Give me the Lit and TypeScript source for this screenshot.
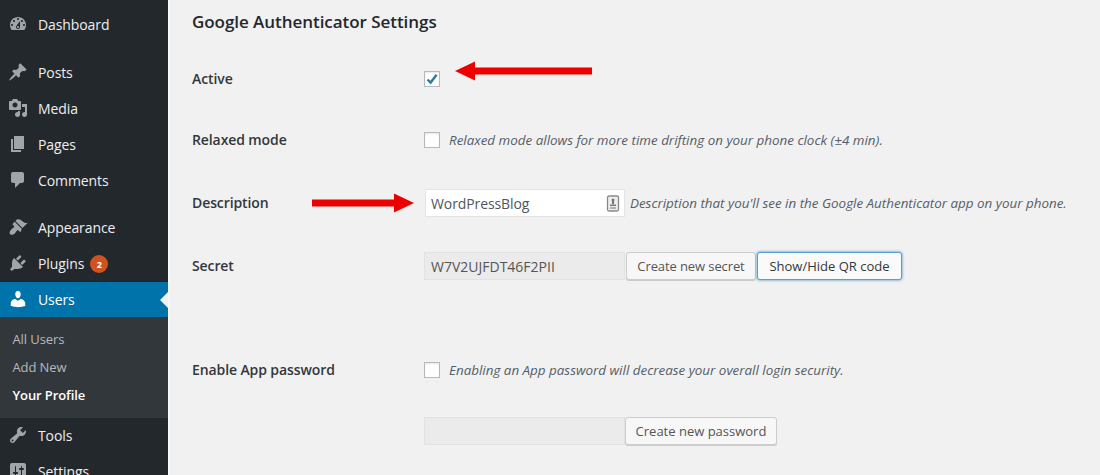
import { LitElement, html, css, svg } from "lit";
import { customElement } from "lit/decorators.js";

const ICONS: Record<string, string> = {
  dashboard: "M3.76 16h12.48c1.1-1.37 1.76-3.11 1.76-5 0-4.42-3.58-8-8-8s-8 3.58-8 8c0 1.89.66 3.63 1.76 5zM10 4c.55 0 1 .45 1 1s-.45 1-1 1-1-.45-1-1 .45-1 1-1zM6 6c.55 0 1 .45 1 1s-.45 1-1 1-1-.45-1-1 .45-1 1-1zm8 0c.55 0 1 .45 1 1s-.45 1-1 1-1-.45-1-1 .45-1 1-1zm-5.37 5.55L12 7v6c0 1.1-.9 2-2 2s-2-.9-2-2c0-.57.24-1.08.63-1.45zM4 10c.55 0 1 .45 1 1s-.45 1-1 1-1-.45-1-1 .45-1 1-1zm12 0c.55 0 1 .45 1 1s-.45 1-1 1-1-.45-1-1 .45-1 1-1zm-5 3c0-.55-.45-1-1-1s-1 .45-1 1 .45 1 1 1 1-.45 1-1z",
  post: "M10.44 3.02l1.82-1.82 6.36 6.35-1.83 1.82c-1.05-.68-2.48-.57-3.41.36l-.75.75c-.92.93-1.04 2.35-.35 3.41l-1.83 1.82-2.41-2.41-2.8 2.79c-.42.42-3.38 2.71-3.8 2.29s1.86-3.39 2.28-3.81l2.79-2.79L4.1 9.36l1.83-1.82c1.05.69 2.48.57 3.4-.36l.75-.75c.93-.92 1.05-2.35.36-3.41z",
  media: "M13 11V4c0-.55-.45-1-1-1h-1.67L9 1H5L3.67 3H2c-.55 0-1 .45-1 1v7c0 .55.45 1 1 1h10c.55 0 1-.45 1-1zM7 4.5c1.38 0 2.5 1.12 2.5 2.5S8.38 9.5 7 9.5 4.5 8.38 4.5 7 5.62 4.5 7 4.5zM14 6h5v10.5c0 1.38-1.12 2.5-2.5 2.5S14 17.88 14 16.5s1.12-2.5 2.5-2.5c.17 0 .34.02.5.05V9h-3V6zm-4 8.05V13h2v3.5c0 1.38-1.12 2.5-2.5 2.5S7 17.88 7 16.5 8.12 14 9.5 14c.17 0 .34.02.5.05z",
  page: "M6 15V2h10v13H6zm-1 1h8v2H3V5h2v11z",
  comments: "M5 2h9c1.1 0 2 .9 2 2v7c0 1.1-.9 2-2 2h-2l-5 5v-5H5c-1.1 0-2-.9-2-2V4c0-1.1.9-2 2-2z",
  appearance: "M14.48 11.06L7.41 3.99l1.5-1.5c.5-.56 2.3-.47 3.51.32 1.21.8 1.43 1.28 2.91 2.1 1.18.64 2.45 1.26 4.45.85zm-.71.71L6.7 4.7 4.93 6.47c-.39.39-.39 1.02 0 1.41l1.06 1.06c.39.39.39 1.03 0 1.42-.6.6-1.43 1.11-2.21 1.69-.35.26-.7.53-1.01.84-1.43 1.43-1.4 3.56-.57 4.36.8.8 2.92.85 4.36-.58.3-.31.57-.66.83-1.01.59-.78 1.09-1.61 1.69-2.21.39-.39 1.03-.39 1.42 0l1.06 1.06c.39.39 1.02.39 1.41 0z",
  plugins: "M13.11 4.36L9.87 7.6 8 5.73l3.24-3.24c.35-.34 1.05-.2 1.56.32.52.51.66 1.21.31 1.55zm-8 1.77l.91-1.12 9.01 9.01-1.19.84c-.71.71-2.63 1.16-3.82 1.16H6.14L4.9 17.26c-.59.59-1.54.59-2.12 0-.59-.58-.59-1.53 0-2.12l1.24-1.24v-3.88c0-1.13.4-3.19 1.09-3.89zm7.26 3.97l3.24-3.24c.34-.35 1.04-.2 1.55.31.52.51.66 1.21.31 1.55l-3.24 3.25z",
  users: "M10 9.25c-2.27 0-2.73-3.44-2.73-3.44C7 4.02 7.82 2 9.97 2c2.16 0 2.98 2.02 2.71 3.81 0 0-.41 3.44-2.68 3.44zm0 2.57L12.72 10c2.39 0 4.52 2.33 4.52 4.53v2.49s-3.65 1.13-7.24 1.13c-3.65 0-7.24-1.13-7.24-1.13v-2.49c0-2.25 1.94-4.48 4.47-4.48z",
  tools: "M16.68 9.77c-1.34 1.34-3.3 1.67-4.95.99l-5.41 6.52c-.99.99-2.59.99-3.58 0s-.99-2.59 0-3.57l6.52-5.42c-.68-1.65-.35-3.61.99-4.95 1.28-1.28 3.12-1.62 4.72-1.06l-2.89 2.89 2.82 2.82 2.86-2.87c.53 1.58.18 3.39-1.08 4.65zM3.81 16.21c.4.39 1.04.39 1.43 0 .4-.4.4-1.04 0-1.43-.39-.4-1.03-.4-1.43 0-.39.39-.39 1.03 0 1.43z",
  settings: "M18 16V4c0-1.1-.9-2-2-2H4c-1.1 0-2 .9-2 2v12c0 1.1.9 2 2 2h12c1.1 0 2-.9 2-2zM8 11h1c.55 0 1 .45 1 1s-.45 1-1 1H8v1.5c0 .28-.22.5-.5.5s-.5-.22-.5-.5V13H6c-.55 0-1-.45-1-1s.45-1 1-1h1V5.5c0-.28.22-.5.5-.5s.5.22.5.5V11zm5-2h-1c-.55 0-1-.45-1-1s.45-1 1-1h1V5.5c0-.28.22-.5.5-.5s.5.22.5.5V7h1c.55 0 1 .45 1 1s-.45 1-1 1h-1v5.5c0 .28-.22.5-.5.5s-.5-.22-.5-.5V9z",
};

const icon = (name: string) => html`<svg class="ico" viewBox="0 0 20 20" aria-hidden="true">${svg`<path d=${ICONS[name]}></path>`}</svg>`;

const item = (name: string, label: string, extra: unknown = "") =>
  html`<div class="item">${icon(name)}<span>${label}</span>${extra}</div>`;

@customElement("app-root")
export class AppRoot extends LitElement {
  static styles = css`
    :host {
      display: flex;
      width: 1100px;
      height: 475px;
      overflow: hidden;
      background: #f1f1f1;
      font-family: "Open Sans", "Noto Sans", sans-serif;
      font-size: 14px;
      color: #444;
    }
    .side {
      flex: none;
      box-sizing: content-box;
      width: 168px;
      height: 490px;
      padding-top: 7px;
      background: #23282d;
      border-right: 2px solid #f9f9f9;
      color: #eee;
      display: flex;
      flex-direction: column;
    }
    .item {
      flex: none;
      height: 36px;
      box-sizing: border-box;
      padding-bottom: 2px;
      display: flex;
      align-items: center;
      padding-left: 38px;
      position: relative;
      letter-spacing: -0.1px;
    }
    .ico {
      position: absolute;
      left: 8px;
      top: 7px;
      width: 20px;
      height: 20px;
      fill: #a0a5aa;
    }
    .g1 { margin-top: 12px; }
    .g2 { margin-top: 11px; }
    .badge {
      width: 18px;
      height: 18px;
      margin: 2px 0 0 6px;
      border-radius: 50%;
      background: #d0531f;
      color: #fff;
      font-size: 9px;
      font-weight: 700;
      display: flex;
      align-items: center;
      justify-content: center;
    }
    .active {
      background: #0073aa;
      color: #fff;
      height: 35px;
      padding-bottom: 1px;
    }
    .active .ico { fill: #fff; }
    .active::after {
      content: "";
      position: absolute;
      right: 0;
      top: 9.5px;
      border: 8px solid transparent;
      border-right-color: #f1f1f1;
      border-left-width: 0;
    }
    .sub {
      flex: none;
      height: 101px;
      box-sizing: border-box;
      padding: 8px 0 9px 12.5px;
      background: #32373c;
      color: #b4b9be;
      font-size: 13px;
      display: flex;
      flex-direction: column;
      letter-spacing: -0.1px;
    }
    .sub div { height: 28px; display: flex; align-items: center; }
    .sub .cur { color: #fff; font-weight: 600; }
    .main {
      flex: 1;
      position: relative;
      padding: 10px 0 0 22px;
      min-width: 0;
    }
    h2 {
      margin: 0 0 31px;
      font-size: 17px;
      line-height: 24px;
      font-weight: 600;
      color: #23282d;
      letter-spacing: -0.05px;
    }
    .row {
      display: grid;
      grid-template-columns: 232px 1fr;
      align-items: center;
      height: 28px;
    }
    .m33 { margin-top: 33px; }
    .m35 { margin-top: 35px; }
    .m76 { margin-top: 76px; }
    .label { font-weight: 600; color: #32373c; letter-spacing: -0.1px; padding-bottom: 2px; }
    .field { display: flex; align-items: center; }
    .check {
      flex: none;
      width: 16px;
      height: 16px;
      box-sizing: border-box;
      background: #fff;
      border: 1px solid #b4b9be;
      box-shadow: inset 0 1px 2px rgba(0, 0, 0, 0.1);
      display: flex;
      align-items: center;
      justify-content: center;
    }
    .check svg { width: 14px; height: 14px; fill: none; stroke: #2a7f9f; stroke-width: 2.4; }
    .note {
      margin-left: 9px;
      font-size: 13.4px;
      font-style: italic;
      color: #555d66;
      white-space: nowrap;
    }
    .desc { margin-left: 5px; }
    .text {
      flex: none;
      width: 200px;
      height: 28px;
      box-sizing: border-box;
      margin-left: 1px;
      padding: 0 6px 0 5px;
      background: #fff;
      border: 1px solid #e4e4e4;
      display: flex;
      align-items: center;
      justify-content: space-between;
      color: #50565c;
      letter-spacing: -0.1px;
    }
    .text svg { width: 14px; height: 17px; margin-right: -2px; }
    .ro {
      flex: none;
      width: 201px;
      height: 28px;
      box-sizing: border-box;
      padding: 0 6px;
      background: #ebebeb;
      border: 1px solid #e2e2e2;
      display: flex;
      align-items: center;
      color: #555;
    }
    .btn {
      flex: none;
      height: 28px;
      box-sizing: border-box;
      background: #f7f7f7;
      border: 1px solid #ccc;
      border-radius: 3px;
      box-shadow: 0 1px 0 #ccc;
      display: flex;
      align-items: center;
      justify-content: center;
      color: #555;
      font-size: 13px;
      white-space: nowrap;
    }
    .b1 { width: 130px; margin-left: 1px; letter-spacing: -0.1px; }
    .focus {
      width: 145px;
      margin-left: 1px;
      background: #fafafa;
      color: #32373c;
      border-color: #5b9dd9;
      box-shadow: 0 0 3px rgba(0, 115, 170, 0.8);
    }
    .b3 { width: 152px; }
    .arrow { position: absolute; display: block; }
    .a1 { left: 285px; top: 61px; }
    .a2 { left: 142px; top: 193px; }
  `;

  render() {
    return html`
      <nav class="side">
        ${item("dashboard", "Dashboard")}
        <div class="g1"></div>
        ${item("post", "Posts")} ${item("media", "Media")} ${item("page", "Pages")} ${item("comments", "Comments")}
        <div class="g2"></div>
        ${item("appearance", "Appearance")}
        ${item("plugins", "Plugins", html`<span class="badge">2</span>`)}
        <div class="item active">${icon("users")}<span>Users</span></div>
        <div class="sub">
          <div>All Users</div>
          <div>Add New</div>
          <div class="cur">Your Profile</div>
        </div>
        ${item("tools", "Tools")} ${item("settings", "Settings")}
      </nav>
      <main class="main">
        <h2>Google Authenticator Settings</h2>

        <div class="row">
          <div class="label">Active</div>
          <div class="field">
            <span class="check"><svg viewBox="0 0 14 14"><path d="M2.5 7.5 L5.6 10.6 L11.6 2.8"></path></svg></span>
          </div>
        </div>

        <div class="row m33">
          <div class="label">Relaxed mode</div>
          <div class="field">
            <span class="check"></span>
            <span class="note">Relaxed mode allows for more time drifting on your phone clock (±4 min).</span>
          </div>
        </div>

        <div class="row m35">
          <div class="label">Description</div>
          <div class="field">
            <div class="text">
              <span>WordPressBlog</span>
              <svg viewBox="0 0 14 17">
                <rect x="1.5" y="1" width="11" height="15" rx="1.5" fill="#eeeeee" stroke="#8a8a8a" stroke-width="1.3"></rect>
                <circle cx="7" cy="5" r="1.5" fill="#777"></circle>
                <path d="M6 5.5h2v3.5H6z M4 9.5h6v1.5H4z M4 12.5h6v1H4z" fill="#777"></path>
              </svg>
            </div>
            <span class="note desc">Description that you'll see in the Google Authenticator app on your phone.</span>
          </div>
        </div>

        <div class="row m35">
          <div class="label">Secret</div>
          <div class="field">
            <div class="ro">W7V2UJFDT46F2PII</div>
            <div class="btn b1">Create new secret</div>
            <div class="btn focus">Show/Hide QR code</div>
          </div>
        </div>

        <div class="row m76">
          <div class="label">Enable App password</div>
          <div class="field">
            <span class="check"></span>
            <span class="note">Enabling an App password will decrease your overall login security.</span>
          </div>
        </div>

        <div class="row m33">
          <div></div>
          <div class="field">
            <div class="ro"></div>
            <div class="btn b3">Create new password</div>
          </div>
        </div>

        <svg class="arrow a1" width="138" height="20" viewBox="0 0 138 20"><path d="M0 10 L20 0.5 V6.5 H137 V13.5 H20 V19.5 Z" fill="#ee0000"></path></svg>
        <svg class="arrow a2" width="103" height="20" viewBox="0 0 103 20"><path d="M102 10 L82 0.5 V6.5 H0 V13.5 H82 V19.5 Z" fill="#ee0000"></path></svg>
      </main>
    `;
  }
}
